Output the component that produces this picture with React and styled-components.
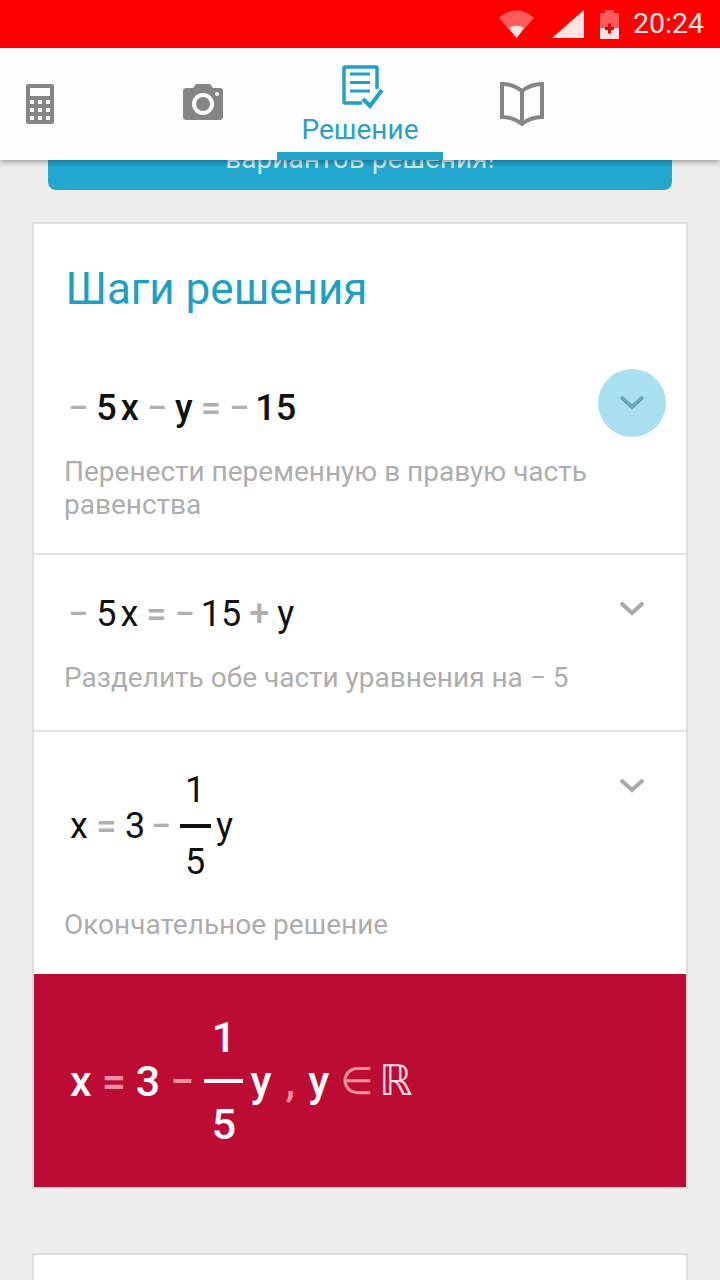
import styled, { createGlobalStyle } from "styled-components";

const GlobalStyle = createGlobalStyle`
  html, body {
    margin: 0;
    padding: 0;
    background: #eeeeee;
  }
  body {
    font-family: Roboto, "Liberation Sans", sans-serif;
  }
`;

const Page = styled.div`
  width: 720px;
  height: 1280px;
  overflow: hidden;
  background: #eeeeee;
`;

const Header = styled.header`
  position: relative;
  z-index: 2;
  box-shadow: 0 2px 6px rgba(0, 0, 0, 0.35);
`;

const StatusBar = styled.div`
  height: 48px;
  background: #ff0000;
  display: flex;
  align-items: center;
  justify-content: flex-end;
  padding-right: 16px;
  box-sizing: border-box;
`;

const StatusIcon = styled.svg`
  display: block;
  margin-right: ${(p) => p.$gap}px;
`;

const Clock = styled.span`
  font-size: 28.5px;
  color: #ffe3e3;
  line-height: 48px;
`;

const TabBar = styled.nav`
  height: 112px;
  background: #fdfdfd;
  display: flex;
`;

const Tab = styled.div`
  width: ${(p) => p.$width}px;
  margin-left: ${(p) => p.$offset || 0}px;
  box-sizing: border-box;
  display: flex;
  flex-direction: column;
  align-items: center;
  padding-top: ${(p) => p.$top}px;
  border-bottom: ${(p) => (p.$active ? "8px solid #23a5cb" : "none")};
`;

const TabLabel = styled.div`
  font-size: 28px;
  line-height: 32px;
  color: #2a9fc4;
  margin-top: 5px;
`;

const Banner = styled.div`
  margin: -40px 48px 0;
  height: 70px;
  border-radius: 0 0 8px 8px;
  background: #23a8d0;
  color: #d3edf6;
  font-size: 28px;
  line-height: 20px;
  text-align: center;
  padding-top: 29px;
  box-sizing: border-box;
`;

const Card = styled.section`
  margin: 32px 32px 0;
  border: 2px solid #dddddd;
  background: #ffffff;
`;

const NextCard = styled(Card)`
  margin-top: 64px;
  height: 200px;
`;

const Title = styled.h2`
  margin: 0;
  padding: 41px 0 36px 31.5px;
  font-size: 44px;
  line-height: 48px;
  font-weight: 400;
  color: #1f9fc4;
`;

const Step = styled.div`
  padding: 20px 20px ${(p) => p.$bottom}px 30px;
  border-bottom: ${(p) => (p.$last ? "none" : "2px solid #e2e2e2")};
`;

const StepHead = styled.div`
  display: flex;
  justify-content: space-between;
  align-items: flex-start;
`;

const Formula = styled.div`
  display: flex;
  align-items: center;
  gap: ${(p) => (p.$tall ? 8.5 : 8)}px;
  padding-left: ${(p) => (p.$tall ? 6 : 4)}px;
  margin-top: ${(p) => (p.$tall ? 20 : 5)}px;
  margin-bottom: ${(p) => (p.$tall ? 15 : 0)}px;
  height: ${(p) => (p.$tall ? "auto" : "68px")};
  font-size: 36px;
  font-weight: ${(p) => (p.$bold ? 500 : 400)};
  color: #111111;
`;

const Op = styled.span`
  color: #b0b0b0;
  font-weight: 500;
  margin-left: ${(p) => p.$pull || 0}px;
`;

const Term = styled.span`
  display: inline-flex;
  gap: 4px;
`;

const Number = styled.span`
  margin-left: -2px;
`;

const Fraction = styled.span`
  display: inline-flex;
  flex-direction: column;
  align-items: center;
  gap: 16px;
  line-height: 36px;
  width: 31px;
  margin-right: -3px;
  font-size: 36px;
`;

const FractionBar = styled.span`
  display: block;
  width: 100%;
  height: 4px;
  background: currentColor;
`;

const Toggle = styled.div`
  width: 68px;
  height: 68px;
  border-radius: 50%;
  flex: none;
  display: flex;
  align-items: center;
  justify-content: center;
  background: ${(p) => (p.$active ? "#a9dfef" : "transparent")};
  color: ${(p) => (p.$active ? "#6da8ba" : "#aaaaaa")};
`;

const Hint = styled.p`
  margin: 13px 0 0;
  font-size: 28px;
  line-height: 33px;
  color: #adadad;
`;

const Answer = styled.div`
  height: 213px;
  background: #bd0c33;
  color: #ffffff;
  display: flex;
  align-items: center;
  gap: 10px;
  padding-left: 36px;
  font-size: 43px;
  font-weight: 500;
`;

const AnswerOp = styled.span`
  color: #f28ea3;
`;

const AnswerComma = styled(AnswerOp)`
  margin: 0 3px 0 4px;
`;

const AnswerSymbol = styled.span`
  color: ${(p) => p.$color};
  font-size: ${(p) => p.$size}px;
  margin-left: ${(p) => p.$shift}px;
  font-weight: 400;
  font-family: "DejaVu Sans", sans-serif;
`;

const AnswerFraction = styled(Fraction)`
  width: 39px;
  font-size: 43px;
  line-height: 40px;
  gap: 21.5px;
  margin-right: -3px;
`;

function Chevron() {
  return (
    <svg width="26" height="16" viewBox="0 0 26 16">
      <path d="M2 2l11 10L24 2" fill="none" stroke="currentColor" strokeWidth="4" />
    </svg>
  );
}

function CalculatorIcon() {
  const cells = [];
  for (let r = 0; r < 3; r++) {
    for (let c = 0; c < 3; c++) {
      cells.push(<rect key={`${r}-${c}`} x={4 + c * 8} y={16 + r * 8} width="4" height="4" fill="#fdfdfd" />);
    }
  }
  return (
    <svg width="28" height="40" viewBox="0 0 28 40">
      <rect width="28" height="40" rx="2" fill="#858585" />
      <rect x="4" y="4" width="20" height="8" fill="#fdfdfd" />
      {cells}
    </svg>
  );
}

function CameraIcon() {
  return (
    <svg width="40" height="36" viewBox="0 0 40 36">
      <path d="M3 4h7l3-4h14l3 4h7a3 3 0 0 1 3 3v26a3 3 0 0 1-3 3H3a3 3 0 0 1-3-3V7a3 3 0 0 1 3-3z" fill="#858585" />
      <circle cx="20" cy="20" r="9" fill="none" stroke="#fdfdfd" strokeWidth="4" />
      <circle cx="34" cy="10" r="2" fill="#fdfdfd" />
    </svg>
  );
}

function SolutionIcon() {
  return (
    <svg width="48" height="44" viewBox="-6 0 48 44">
      <path d="M20 38H3a1 1 0 0 1-1-1V3a1 1 0 0 1 1-1h31a1 1 0 0 1 1 1v21" fill="none" stroke="#23a0c6" strokeWidth="3.500" />
      <path d="M8 9h20M8 17.500h20M8 26h20" stroke="#23a0c6" strokeWidth="3" />
      <path d="M21 34l7 7 12-16" fill="none" stroke="#23a0c6" strokeWidth="4" />
    </svg>
  );
}

function BookIcon() {
  return (
    <svg width="44" height="44" viewBox="0 0 44 44">
      <path d="M22 9C17 5 9 2 2 2v33c7 0 15 3 20 7 5-4 13-7 20-7V2c-7 0-15 3-20 7zM22 9v33" fill="none" stroke="#858585" strokeWidth="4" />
    </svg>
  );
}

export default function App() {
  return (
    <Page>
      <GlobalStyle />
      <Header>
        <StatusBar>
          <StatusIcon $gap={18} width="35" height="28" viewBox="0 0 35 28">
            <path d="M0 8C10-2 25-2 35 8L17.500 28z" fill="#ffe3e3" opacity="0.4" />
            <path d="M10 18c4-3 11-3 15 0l-7.500 10z" fill="#ffe3e3" />
          </StatusIcon>
          <StatusIcon $gap={16} width="32" height="28" viewBox="0 0 32 28">
            <path d="M32 0v28H0z" fill="#ffe3e3" />
          </StatusIcon>
          <StatusIcon $gap={14} width="19" height="29" viewBox="0 0 19 29">
            <path d="M5 0h9v3h5v15H0V3h5z" fill="#ffe3e3" opacity="0.4" />
            <path d="M0 18h19v11H0z" fill="#ffe3e3" />
            <path d="M8 13.500h3V17h3v3h-3v3.500H8V20H5v-3h3z" fill="#e0000b" />
          </StatusIcon>
          <Clock>20:24</Clock>
        </StatusBar>
        <TabBar>
          <Tab $width={80} $top={36}>
            <CalculatorIcon />
          </Tab>
          <Tab $width={148} $offset={49} $top={36}>
            <CameraIcon />
          </Tab>
          <Tab $width={166} $top={17} $active>
            <SolutionIcon />
            <TabLabel>Решение</TabLabel>
          </Tab>
          <Tab $width={158} $top={34}>
            <BookIcon />
          </Tab>
        </TabBar>
      </Header>
      <Banner>вариантов решения!</Banner>
      <Card>
        <Title>Шаги решения</Title>
        <Step $bottom={32}>
          <StepHead>
            <Formula $bold>
              <Op>−</Op>
              <Term>
                <span>5</span>
                <span>x</span>
              </Term>
              <Op>−</Op>
              <span>y</span>
              <Op>=</Op>
              <Op>−</Op>
              <Number>15</Number>
            </Formula>
            <Toggle $active>
              <Chevron />
            </Toggle>
          </StepHead>
          <Hint>Перенести переменную в правую часть равенства</Hint>
        </Step>
        <Step $bottom={36}>
          <StepHead>
            <Formula>
              <Op>−</Op>
              <Term>
                <span>5</span>
                <span>x</span>
              </Term>
              <Op>=</Op>
              <Op>−</Op>
              <Number>15</Number>
              <Op>+</Op>
              <span>y</span>
            </Formula>
            <Toggle>
              <Chevron />
            </Toggle>
          </StepHead>
          <Hint>Разделить обе части уравнения на − 5</Hint>
        </Step>
        <Step $bottom={33} $last>
          <StepHead>
            <Formula $tall>
              <span>x</span>
              <Op>=</Op>
              <span>3</span>
              <Op $pull={-3}>−</Op>
              <Fraction>
                <span>1</span>
                <FractionBar />
                <span>5</span>
              </Fraction>
              <span>y</span>
            </Formula>
            <Toggle>
              <Chevron />
            </Toggle>
          </StepHead>
          <Hint>Окончательное решение</Hint>
        </Step>
        <Answer>
          <span>x</span>
          <AnswerOp>=</AnswerOp>
          <span>3</span>
          <AnswerOp>−</AnswerOp>
          <AnswerFraction>
            <span>1</span>
            <FractionBar />
            <span>5</span>
          </AnswerFraction>
          <span>y</span>
          <AnswerComma>,</AnswerComma>
          <span>y</span>
          <AnswerSymbol $color="#f28ea3" $size={38} $shift={1}>∈</AnswerSymbol>
          <AnswerSymbol $color="#fbdde3" $size={42} $shift={-4}>ℝ</AnswerSymbol>
        </Answer>
      </Card>
      <NextCard />
    </Page>
  );
}
